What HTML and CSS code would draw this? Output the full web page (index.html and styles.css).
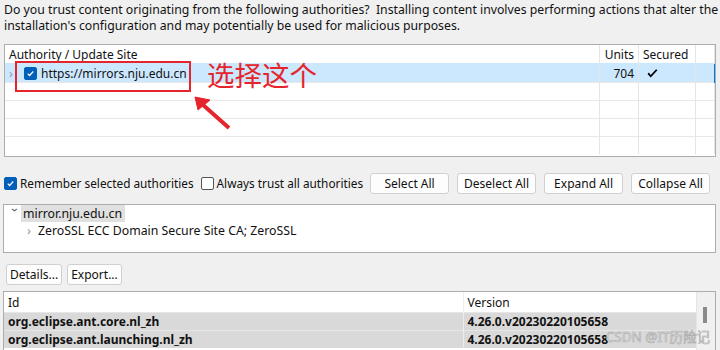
FILE: index.html
```html
<!DOCTYPE html>
<html lang="en">
<head>
  <meta charset="UTF-8" />
  <title>Trust Authorities</title>
  <link rel="stylesheet" href="styles.css">
</head>
<body>

  <p class="intro">Do you trust content originating from the following authorities?&nbsp; Installing content involves performing actions that alter the<br>installation's configuration and may potentially be used for malicious purposes.</p>

  <div class="sites-wrap">
    <table class="grid sites">
      <colgroup>
        <col />
        <col class="c-units" />
        <col class="c-secured" />
        <col class="c-fill" />
      </colgroup>
      <thead>
        <tr><th>Authority / Update Site</th><th class="num">Units</th><th>Secured</th><th></th></tr>
      </thead>
      <tbody>
        <tr class="sel">
          <td><span class="twisty">›</span><span class="cb on"><svg viewBox="0 0 12 12"><path d="M3 6.2l2 2 4-4.4" /></svg></span>https://mirrors.nju.edu.cn</td>
          <td class="num">704</td>
          <td class="tick"><svg viewBox="0 0 12 10"><path d="M0.5 5.5L4 9.5L11.5 1.5L10 0.3L4 6.6L2 4Z" /></svg></td>
          <td class="edge"></td>
        </tr>
        <tr><td></td><td></td><td></td><td></td></tr>
        <tr><td></td><td></td><td></td><td></td></tr>
        <tr><td></td><td></td><td></td><td></td></tr>
        <tr class="short"><td></td><td></td><td></td><td></td></tr>
      </tbody>
    </table>

    <div class="mark-box"></div>
    <div class="mark-text">选择这个</div>
    <svg class="mark-arrow" viewBox="0 0 40 36">
      <path d="M36 33L9 9" />
      <path class="head" d="M2 2L17 5L5 15Z" />
    </svg>
  </div>

  <div class="options">
    <label class="check"><span class="cb on"><svg viewBox="0 0 12 12"><path d="M3 6.2l2 2 4-4.4" /></svg></span>Remember selected authorities</label>
    <label class="check"><span class="cb"></span>Always trust all authorities</label>
    <div class="buttons">
      <button class="btn wide">Select All</button>
      <button class="btn wide">Deselect All</button>
      <button class="btn wide">Expand All</button>
      <button class="btn wide">Collapse All</button>
    </div>
  </div>

  <div class="tree">
    <div class="node"><span class="twisty down">›</span><span class="node-sel">mirror.nju.edu.cn</span></div>
    <div class="node child"><span class="twisty">›</span>ZeroSSL ECC Domain Secure Site CA; ZeroSSL</div>
  </div>

  <div class="actions">
    <button class="btn">Details...</button>
    <button class="btn">Export...</button>
  </div>

  <div class="units-wrap">
    <table class="grid units">
      <colgroup>
        <col class="c-id" />
        <col />
      </colgroup>
      <thead>
        <tr><th>Id</th><th>Version</th></tr>
      </thead>
      <tbody>
        <tr><td>org.eclipse.ant.core.nl_zh</td><td>4.26.0.v20230220105658</td></tr>
        <tr><td>org.eclipse.ant.launching.nl_zh</td><td>4.26.0.v20230220105658</td></tr>
      </tbody>
    </table>
    <div class="scroll"><div class="thumb"></div></div>
  </div>

  <div class="watermark">CSDN @IT历险记</div>

</body>
</html>
```

FILE: styles.css
```css
body {
  background: #f0f0f0;
  color: #111;
  font-family: 'Noto Sans', 'Noto Sans CJK SC', sans-serif;
  font-size: 12px;
  margin: 0;
  padding: 0 4px;
  height: 350px;
  overflow: hidden;
  position: relative;
}

.intro {
  margin: 2px 0 0;
  line-height: 16px;
  font-size: 12.25px;
  white-space: nowrap;
}

/* tables */
.grid {
  width: 100%;
  border-collapse: collapse;
  table-layout: fixed;
  background: #fff;
}

.grid th {
  font-weight: normal;
  text-align: left;
  height: 18px;
  padding: 0 4px;
  border-right: 1px solid #e5e5e5;
  white-space: nowrap;
}

.grid td {
  height: 17px;
  padding: 0 4px;
  border-top: 1px solid #e8e8e8;
  border-right: 1px solid #e5e5e5;
  white-space: nowrap;
}

.grid .num {
  text-align: right;
}

.sites-wrap {
  position: relative;
  margin-top: 10px;
  border: 1px solid #adadad;
  height: 111px;
  overflow: hidden;
  background: #fff;
}

.sites col.c-units { width: 39px; }
.sites col.c-secured { width: 57px; }
.sites col.c-fill { width: 19px; }

.sites tr.sel td {
  background: #cce8ff;
  border-top-color: #cce8ff;
}

.sites tr.sel td.edge {
  border-right: 1px solid #0078d7;
}

.sites td.tick {
  padding-left: 8px;
}

.tick svg {
  display: block;
  width: 11px;
  height: 9px;
  fill: #000;
}

.twisty {
  display: inline-block;
  width: 12px;
  color: #9a9a9a;
  font-size: 13px;
}

.twisty.down {
  transform: rotate(90deg);
  color: #555;
}

.cb {
  display: inline-block;
  width: 11px;
  height: 11px;
  border: 1px solid #555;
  border-radius: 2px;
  background: #fff;
  vertical-align: -2px;
  margin-right: 4px;
}

.cb.on {
  background: #005fb8;
  border-color: #005fb8;
}

.cb svg {
  display: block;
  width: 11px;
  height: 11px;
  fill: none;
  stroke: #fff;
  stroke-width: 1.3;
}

.sites .cb {
  margin-left: 3px;
}

/* red annotation */
.mark-box {
  position: absolute;
  left: 10px;
  top: 16px;
  width: 172px;
  height: 27px;
  border: 2px solid #e5242b;
}

.mark-text {
  position: absolute;
  left: 202px;
  top: 11px;
  font-size: 27.5px;
  line-height: 36px;
  color: #e5242b;
  font-family: 'Noto Sans CJK SC', sans-serif;
}

.mark-arrow {
  position: absolute;
  left: 188px;
  top: 50px;
  width: 40px;
  height: 36px;
  fill: none;
  stroke: #e5242b;
  stroke-width: 4;
}

.mark-arrow .head {
  fill: #e5242b;
  stroke-width: 1;
}

/* options row */
.options {
  display: flex;
  align-items: center;
  margin-top: 15px;
  height: 22px;
  font-size: 11.8px;
}

.check {
  display: flex;
  align-items: center;
  margin-right: 7px;
  white-space: nowrap;
}

.check .cb {
  margin-right: 3px;
  vertical-align: 0;
}

.buttons {
  display: flex;
  gap: 8px;
  margin-left: auto;
  margin-right: 6px;
}

.btn {
  font: inherit;
  font-size: 12px;
  color: #111;
  background: #fdfdfd;
  border: 1px solid #d0d0d0;
  border-radius: 3px;
  height: 21px;
  padding: 0 3px;
}

.btn.wide {
  width: 79px;
}

/* tree */
.tree {
  margin: 10px 0 0 -1px;
  height: 47px;
  border: 1px solid #adadad;
  background: #fff;
}

.node {
  height: 17px;
  line-height: 17px;
  padding-left: 6px;
  white-space: nowrap;
  font-size: 12.3px;
}

.node .twisty {
  width: 11px;
}

.node-sel {
  background: #e0e0e0;
  padding: 0 3px 0 2px;
  display: inline-block;
}

.node.child {
  padding-left: 23px;
}

/* actions */
.actions {
  display: flex;
  gap: 5px;
  margin: 11px 0 0 2px;
}

.actions .btn {
  padding: 0 3px;
}

/* units table */
.units-wrap {
  position: relative;
  margin: 6px 0 0 -1px;
  border: 1px solid #adadad;
  height: 70px;
  background: #fff;
  padding-right: 18px;
}

.units col.c-id { width: 459px; }

.units th {
  height: 20px;
  border-right: 1px solid #eee;
}

.units td {
  background: #d9d9d9;
  font-weight: bold;
  border-top: 1px solid #e6e6e6;
  border-right: 1px solid #ececec;
}

.scroll {
  position: absolute;
  top: 0;
  right: 0;
  width: 18px;
  height: 100%;
  background: #f0f0f0;
  border-left: 1px solid #e5e5e5;
}

.thumb {
  width: 4px;
  height: 16px;
  margin: 15px 0 0 6px;
  background: #8a8a8a;
}

.watermark {
  position: absolute;
  right: 10px;
  bottom: 4px;
  font-size: 13.5px;
  color: #ececec;
  -webkit-text-stroke: 0.6px #a8a8a8;
  font-family: 'Noto Sans', 'Noto Sans CJK SC', sans-serif;
}
```
